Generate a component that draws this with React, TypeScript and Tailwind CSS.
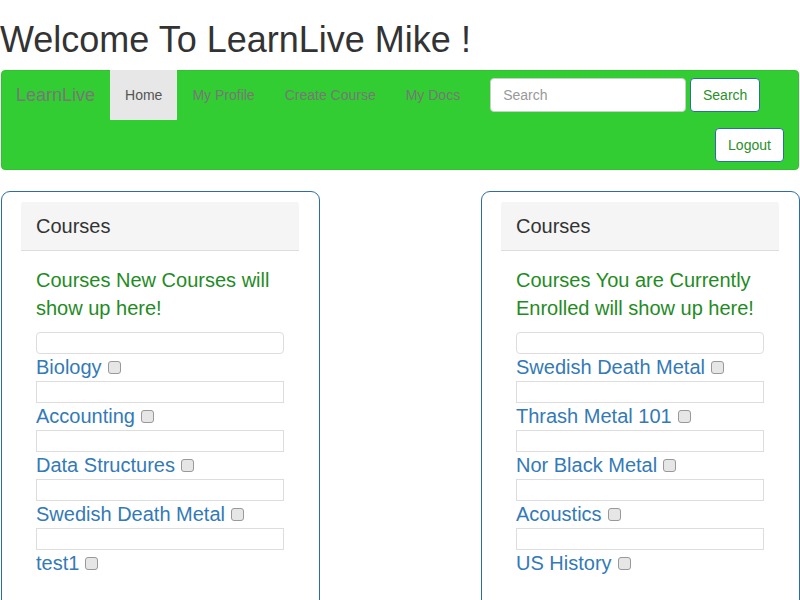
import React from 'react';

const newCourses = ['Biology', 'Accounting', 'Data Structures', 'Swedish Death Metal', 'test1'];
const enrolled = ['Swedish Death Metal', 'Thrash Metal 101', 'Nor Black Metal', 'Acoustics', 'US History'];

function CoursePanel({ note, courses }: { note: string; courses: string[] }) {
  return (
    <div className="w-[319px] h-[430px] border border-[#2e6da4] rounded-[9px] pl-[19px] pr-[20px] pt-[10px]">
      <div className="h-[49px] bg-[#f5f5f5] border-b border-[#ddd] rounded-t-[3px] px-[15px] flex items-center text-[20px] text-[#333]">
        Courses
      </div>
      <div className="px-[15px] pt-[15px]">
        <p className="text-[20px] leading-[28px] text-[#1f8c1f]">{note}</p>
        <div className="mt-[10px]">
          {courses.map((c, i) => (
            <div key={c}>
              <div className={`h-[22px] border border-[#ddd] bg-white ${i === 0 ? 'rounded-[4px]' : ''}`} />
              <div className="h-[27px] flex items-center">
                <a href="#" className="text-[20px] leading-[27px] text-[#337ab7]">{c}</a>
                <span className="ml-[6px] w-[13px] h-[13px] rounded-[3px] border border-[#999] bg-[#e6e6e6]" />
              </div>
            </div>
          ))}
        </div>
      </div>
    </div>
  );
}

export default function App() {
  return (
    <div className="bg-white min-h-[600px] overflow-hidden text-[#333]" style={{ fontFamily: '"Liberation Sans", Arial, sans-serif' }}>
      <h1 className="text-[36px] leading-[40px] mt-[20px] mb-[10px]">Welcome To LearnLive Mike !</h1>

      <nav className="mx-px border border-[#2fc42f] bg-[#32cd32] rounded-[4px] h-[100px] text-[14px]">
        <div className="flex h-[50px] -mt-px items-center">
          <a href="#" className="pl-[14px] pr-[15px] h-[50px] flex items-center text-[18px] text-[#777]">LearnLive</a>
          <a href="#" className="px-[15px] h-[50px] flex items-center bg-[#e7e7e7] text-[#555]">Home</a>
          <a href="#" className="px-[15px] h-[50px] flex items-center text-[#777]">My Profile</a>
          <a href="#" className="px-[15px] h-[50px] flex items-center text-[#777]">Create Course</a>
          <a href="#" className="px-[15px] h-[50px] flex items-center text-[#777]">My Docs</a>
          <div className="ml-[15px] flex items-center gap-[4px]">
            <input
              placeholder="Search"
              className="w-[196px] h-[34px] rounded-[4px] border border-[#ccc] bg-white px-[12px] text-[14px] placeholder:text-[#999] outline-none"
            />
            <button className="w-[70px] h-[34px] rounded-[4px] border border-[#2e6da4] bg-white text-[#2a8f2a]">Search</button>
          </div>
        </div>
        <div className="flex h-[50px] justify-end items-center pr-[14px]">
          <button className="w-[69px] h-[34px] rounded-[4px] border border-[#2e6da4] bg-white text-[#2a8f2a]">Logout</button>
        </div>
      </nav>

      <div className="mt-[21px] flex justify-between pl-px">
        <CoursePanel note="Courses New Courses will show up here!" courses={newCourses} />
        <CoursePanel note="Courses You are Currently Enrolled will show up here!" courses={enrolled} />
      </div>
    </div>
  );
}
